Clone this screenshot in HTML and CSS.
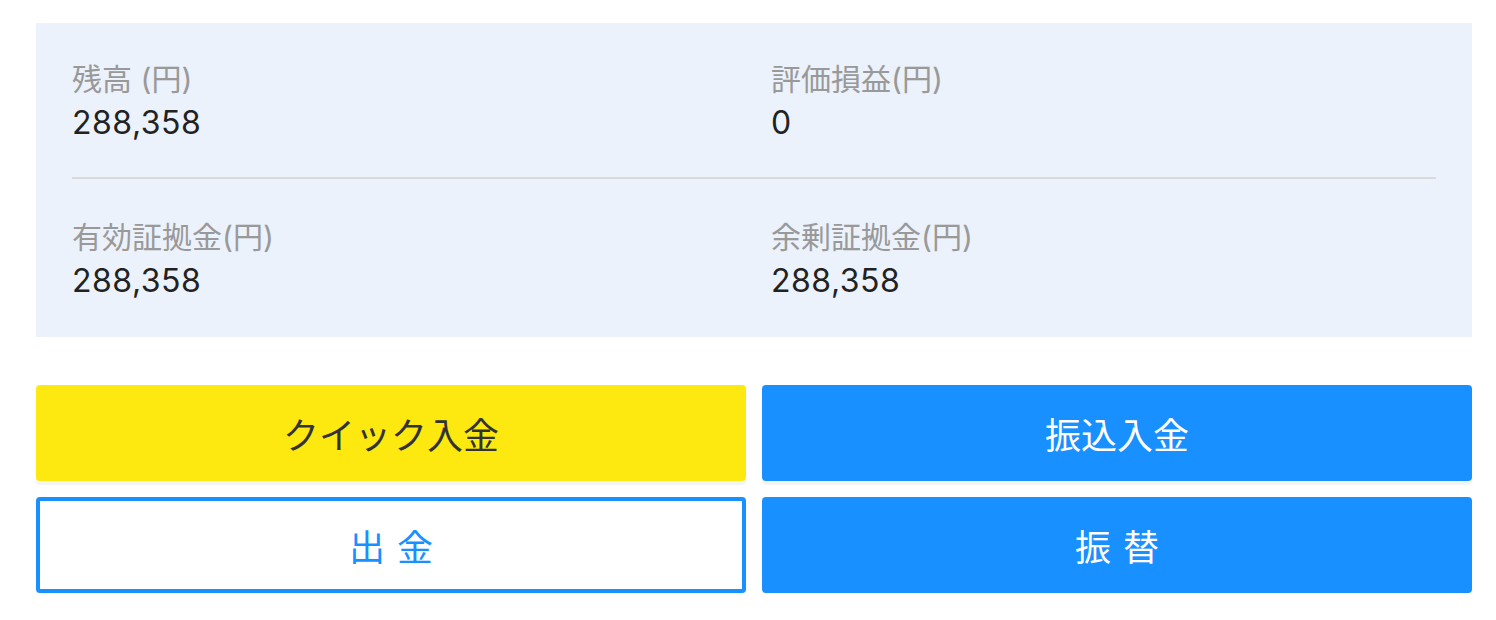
FILE: index.html
```html
<!DOCTYPE html>
<html lang="ja">
<head>
<meta charset="utf-8">
<link rel="stylesheet" href="styles.css">
</head>
<body>
<div class="page">
  <section class="summary">
    <div class="row row-top">
      <div class="cell">
        <div class="label">残高 (円)</div>
        <div class="value">288,358</div>
      </div>
      <div class="cell">
        <div class="label">評価損益(円)</div>
        <div class="value">0</div>
      </div>
    </div>
    <div class="row row-bottom">
      <div class="cell">
        <div class="label">有効証拠金(円)</div>
        <div class="value">288,358</div>
      </div>
      <div class="cell">
        <div class="label">余剰証拠金(円)</div>
        <div class="value">288,358</div>
      </div>
    </div>
  </section>
  <div class="actions">
    <button class="btn btn-yellow">クイック入金</button>
    <button class="btn btn-blue">振込入金</button>
    <button class="btn btn-outline"><span class="two">出金</span></button>
    <button class="btn btn-blue"><span class="two">振替</span></button>
  </div>
</div>
</body>
</html>
```

FILE: styles.css
```css
html, body {
  margin: 0;
  padding: 0;
  background: #ffffff;
}
body {
  font-family: Inter, "Noto Sans CJK JP", sans-serif;
}
.page {
  padding: 23px 24px 0 36px;
}
.summary {
  background: #ebf2fb;
  padding: 0 36px;
}
.row {
  display: grid;
  grid-template-columns: 1fr 1fr;
  column-gap: 34px;
}
.row-top {
  padding-top: 35px;
  padding-bottom: 32px;
  border-bottom: 2px solid #dadada;
}
.row-bottom {
  padding-top: 37px;
  padding-bottom: 34px;
}
.label {
  font-size: 30px;
  line-height: 42px;
  color: #999999;
  font-family: Inter, "Noto Sans CJK JP", sans-serif;
}
.value {
  margin-top: 1px;
  font-size: 32px;
  line-height: 44px;
  letter-spacing: 0.5px;
  color: #222222;
  font-family: Inter, "Noto Sans CJK JP", sans-serif;
}
.actions {
  margin-top: 48px;
  display: grid;
  grid-template-columns: 1fr 1fr;
  gap: 16px;
}
.btn {
  height: 96px;
  border: 0;
  border-radius: 4px;
  font-family: "Noto Sans CJK JP", sans-serif;
  font-size: 36px;
  padding: 0;
  box-shadow: 0 4px 0 rgba(0, 0, 0, 0.045);
  cursor: pointer;
}
.btn-yellow {
  background: #fde910;
  color: #333333;
}
.btn-blue {
  background: #1890ff;
  color: #ffffff;
}
.btn-outline {
  background: #ffffff;
  color: #1890ff;
  border: 4px solid #1890ff;
}
.two {
  letter-spacing: 0.34em;
  margin-right: -0.34em;
}
```
